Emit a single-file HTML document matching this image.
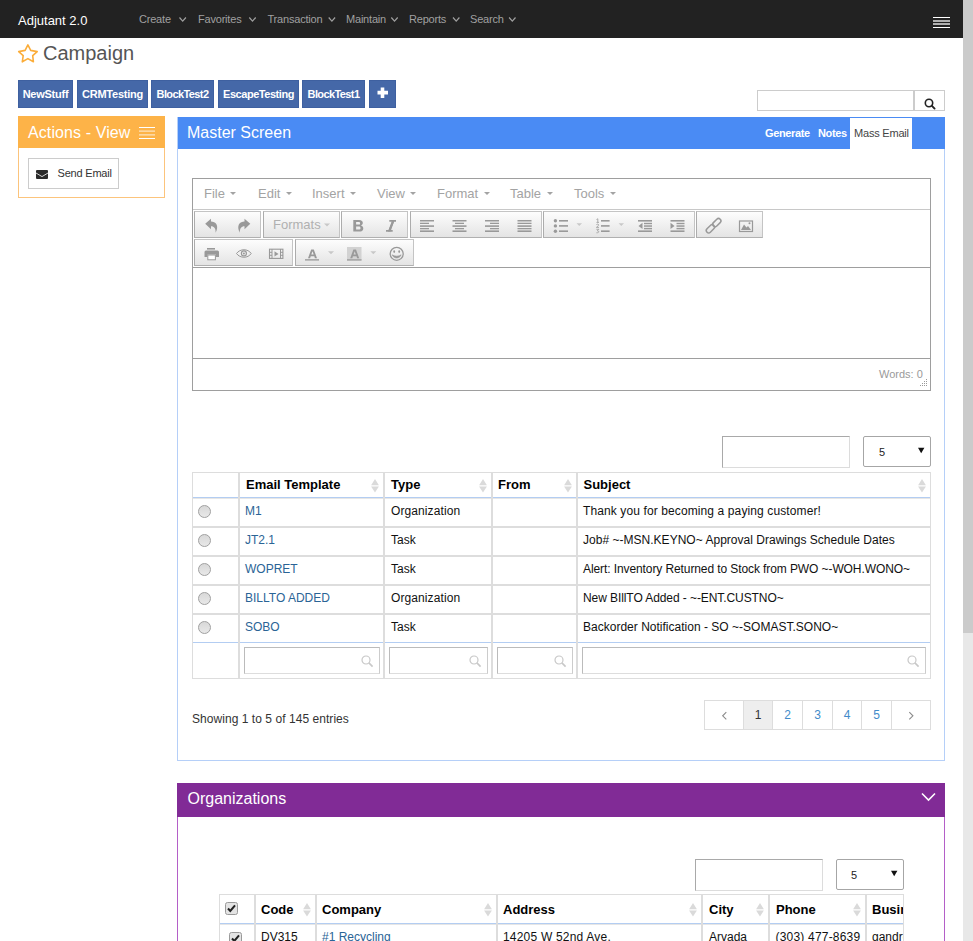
<!DOCTYPE html>
<html><head><meta charset="utf-8">
<style>
*{box-sizing:border-box;}
html,body{margin:0;padding:0;}
body{width:973px;height:941px;overflow:hidden;position:relative;background:#fff;font-family:"Liberation Sans",sans-serif;color:#333;font-size:12px;}
.abs{position:absolute;}
#sb{left:963px;top:0;width:10px;height:941px;background:#e8e8e8;}
#sbt{left:963px;top:0;width:10px;height:633px;background:#cbcbcb;}
#nav{left:0;top:0;width:963px;height:38px;background:#222;}
.brand{left:18px;top:13px;color:#fff;font-size:13px;white-space:nowrap;}
.mi{top:13px;color:#a0a0a0;font-size:11px;white-space:nowrap;letter-spacing:-0.2px;}
.chev{display:inline-block;width:5px;height:5px;border-right:1px solid #9d9d9d;border-bottom:1px solid #9d9d9d;transform:rotate(45deg);margin-left:7px;position:relative;top:-3px;}
#title{left:43px;top:42px;font-size:20px;color:#555;white-space:nowrap;}
.sbtn{top:80px;height:28px;background:#4568a8;border:1px solid #3e60a0;color:#fff;font-weight:bold;font-size:11px;letter-spacing:-0.25px;text-align:center;line-height:26px;white-space:nowrap;}

#srch{left:757px;top:90px;width:157px;height:21px;border:1px solid #ccc;background:#fff;}
#srchb{left:914px;top:90px;width:31px;height:21px;border:1px solid #ccc;background:#fff;}
#act{left:18px;top:116px;width:147px;height:82px;border:1px solid #fcc47c;background:#fff;}
#acth{left:18px;top:116px;width:147px;height:32px;background:#fdb348;}
.acttxt{left:10px;top:8px;color:#fff;font-size:16px;white-space:nowrap;letter-spacing:0.1px;}
.ham{width:16px;height:12px;}
#sendbtn{left:28px;top:158px;width:91px;height:31px;border:1px solid #ccc;background:#fff;}
.sendtxt{left:28.5px;top:8px;font-size:11px;color:#333;white-space:nowrap;letter-spacing:-0.2px;}
#mp{left:177px;top:117px;width:768px;height:644px;border:1px solid #b5cff8;background:#fff;}
#mph{left:178px;top:117px;width:767px;height:32px;background:#4a8bf4;}
.mptxt{left:9px;top:7px;color:#fff;font-size:16px;white-space:nowrap;}
.tab{top:10px;color:#fff;font-weight:bold;font-size:11px;white-space:nowrap;letter-spacing:-0.35px;}
#masstab{left:672px;top:1px;width:62px;height:31px;background:#fff;}
.masstxt{left:4px;top:9px;color:#444;font-size:11px;white-space:nowrap;letter-spacing:-0.2px;}

#ed{left:192px;top:178px;width:739px;height:213px;border:1px solid #9e9e9e;background:#fff;}
#edmb{left:193px;top:209px;width:737px;height:1px;background:#c8c8c8;}
#edtb{left:193px;top:267px;width:737px;height:1px;background:#9e9e9e;}
#edsb{left:193px;top:358px;width:737px;height:1px;background:#9e9e9e;}
.mm{top:185.6px;font-size:13px;color:#a3a3a3;white-space:nowrap;}
.car{display:inline-block;width:0;height:0;border-left:3px solid transparent;border-right:3px solid transparent;border-top:3px solid #a3a3a3;margin-left:5.5px;position:relative;top:-2.5px;}
.grp{height:27px;border:1px solid #c4c4c4;border-bottom-color:#b0b0b0;border-left-color:#acacac;background:linear-gradient(#fdfdfd,#e4e4e4);}
.words{left:879px;top:368px;font-size:11px;color:#9a9a9a;white-space:nowrap;}
.th{font-size:13px;font-weight:bold;color:#000;white-space:nowrap;line-height:15px;}
.td{font-size:12px;color:#111;white-space:nowrap;line-height:14px;}
.lk{color:#2a6496;}
.radio{width:13px;height:13px;border-radius:50%;border:1px solid #a0a0a0;background:linear-gradient(#d8d8d8,#e8e8e8);}
.finp{height:27px;border:1px solid #bbb;border-right-color:#ccc;border-bottom-color:#ddd;background:#fff;}
.inp{border:1px solid #a9a9a9;border-right-color:#dcdcdc;border-bottom-color:#dcdcdc;background:#fff;}
.sel{border:1px solid #a6a6a6;border-radius:2px;background:#fff;}
.seltxt{font-size:12px;color:#222;line-height:14px;}
.pg{top:700px;height:30px;border:1px solid #ddd;background:#fff;font-size:12px;color:#428bca;text-align:center;line-height:28px;}
.info{font-size:12px;color:#333;white-space:nowrap;line-height:14px;}
</style></head><body>
<div id="sb" class="abs"></div><div id="sbt" class="abs"></div>
<div id="nav" class="abs">
  <div class="abs brand">Adjutant 2.0</div>
  <div class="abs mi" style="left:139px">Create</div>
  <div class="abs mi" style="left:198px">Favorites</div>
  <div class="abs mi" style="left:267.5px">Transaction</div>
  <div class="abs mi" style="left:346px">Maintain</div>
  <div class="abs mi" style="left:409px">Reports</div>
  <div class="abs mi" style="left:470px">Search</div>
  <svg class="abs" style="left:0;top:0" width="963" height="38" viewBox="0 0 963 38"><g fill="none" stroke="#a0a0a0" stroke-width="1.2"><path d="M179.5 17.5 L182.7 21.2 L185.9 17.5"/><path d="M249.3 17.5 L252.5 21.2 L255.7 17.5"/><path d="M328.7 17.5 L331.9 21.2 L335.1 17.5"/><path d="M391.3 17.5 L394.5 21.2 L397.7 17.5"/><path d="M453 17.5 L456.2 21.2 L459.4 17.5"/><path d="M509.1 17.5 L512.3 21.2 L515.5 17.5"/></g><g stroke="#fff" stroke-width="1.1"><path d="M933 17.5 H950 M933 27.5 H950"/></g><g stroke="#e0e0e0" stroke-width="1.3"><path d="M933 21 H950 M933 24 H950"/></g></svg>
</div>
<svg class="abs" style="left:14px;top:40px" width="30" height="26" viewBox="0 0 30 26"><path d="M13.9 4.9 L16.7 10.4 L23.2 11.6 L18.7 15.6 L19.4 21.8 L13.9 18.6 L8.3 21.8 L9.2 15.6 L4.7 11.6 L11.1 10.4 Z" fill="none" stroke="#fbad3a" stroke-width="1.6" stroke-linejoin="round"/></svg>
<div id="title" class="abs">Campaign</div>
<div class="abs sbtn" style="left:18px;width:55px">NewStuff</div>
<div class="abs sbtn" style="left:77px;width:71px">CRMTesting</div>
<div class="abs sbtn" style="left:151px;width:63px;letter-spacing:-0.6px">BlockTest2</div>
<div class="abs sbtn" style="left:218px;width:81px;letter-spacing:-0.45px">EscapeTesting</div>
<div class="abs sbtn" style="left:302px;width:63px;letter-spacing:-0.6px">BlockTest1</div>
<div class="abs sbtn" style="left:369px;width:27px"><svg class="abs" style="left:7px;top:6px" width="12" height="12" viewBox="0 0 12 12"><path d="M5.5 0.5 V11 M0.5 5.6 H11" stroke="#fff" stroke-width="3.6"/></svg></div>

<div id="srch" class="abs"></div>
<div id="srchb" class="abs"><svg class="abs" style="left:9px;top:7px" width="12" height="12" viewBox="0 0 12 12"><circle cx="5" cy="5" r="3.7" fill="none" stroke="#222" stroke-width="1.6"/><path d="M7.7 7.7 L10.6 10.6" stroke="#222" stroke-width="1.9" stroke-linecap="round"/></svg></div>
<div id="act" class="abs"></div>
<div id="acth" class="abs">
  <div class="abs acttxt">Actions - View</div>
  <svg class="abs" style="left:121px;top:11px" width="16" height="12" viewBox="0 0 16 12"><g stroke="#fff" stroke-width="1.1"><path d="M0 0.5H16M0 11.5H16"/></g><g stroke="#fde3bd" stroke-width="1.2"><path d="M0 4.2H16M0 7.8H16"/></g></svg>
</div>
<div id="sendbtn" class="abs">
  <svg class="abs" style="left:7px;top:11px" width="12" height="9" viewBox="0 0 12 9"><rect x="0" y="0" width="12" height="9" rx="1" fill="#2b2b2b"/><path d="M0 3 L6 6.6 L12 3" fill="none" stroke="#e8e8e8" stroke-width="0.9"/></svg>
  <div class="abs sendtxt">Send Email</div>
</div>
<div id="mp" class="abs"></div>
<div id="mph" class="abs">
  <div class="abs mptxt">Master Screen</div>
  <div class="abs tab" style="left:587px">Generate</div>
  <div class="abs tab" style="left:640px">Notes</div>
  <div id="masstab" class="abs"><div class="abs masstxt">Mass Email</div></div>
</div>

<div id="ed" class="abs"></div>
<div id="edmb" class="abs"></div>
<div class="abs mm" style="left:204px">File<span class="car"></span></div>
<div class="abs mm" style="left:258px">Edit<span class="car"></span></div>
<div class="abs mm" style="left:312px">Insert<span class="car"></span></div>
<div class="abs mm" style="left:377px">View<span class="car"></span></div>
<div class="abs mm" style="left:437px">Format<span class="car"></span></div>
<div class="abs mm" style="left:510px">Table<span class="car"></span></div>
<div class="abs mm" style="left:574px">Tools<span class="car"></span></div>
<div class="abs grp" style="left:194px;top:211px;width:67px"></div>
<div class="abs grp" style="left:263px;top:211px;width:77px"></div>
<div class="abs grp" style="left:341px;top:211px;width:67px"></div>
<div class="abs grp" style="left:410px;top:211px;width:132px"></div>
<div class="abs grp" style="left:543px;top:211px;width:152px"></div>
<div class="abs grp" style="left:696px;top:211px;width:67px"></div>
<div class="abs grp" style="left:194px;top:239px;width:99px"></div>
<div class="abs grp" style="left:295px;top:239px;width:119px"></div>
<div id="edtb" class="abs"></div>
<div id="edsb" class="abs"></div>
<div class="abs words">Words: 0</div>
<svg class="abs" style="left:0;top:0" width="973" height="400" viewBox="0 0 973 400">
 <g fill="#999" stroke="none">
  <!-- undo -->
  <path d="M205.2 223.8 L211 218.7 V221.4 C215.5 221.4 219.6 225.3 215.6 232.7 C215.9 228.6 214.2 226.3 211 226.3 V229.2 Z"/>
  <!-- redo -->
  <path d="M 250.3 223.8 L 244.5 218.7 V 221.4 C 240.0 221.4 235.9 225.3 239.9 232.7 C 239.6 228.6 241.3 226.3 244.5 226.3 V 229.2 Z"/>
 </g>
 <text x="273" y="229" font-family="Liberation Sans" font-size="13" fill="#b0b0b0">Formats</text>
 <path d="M324 223.5 L330 223.5 L327 226.5 Z" fill="#c8c8c8"/>
 <path fill-rule="evenodd" fill="#999" d="M353.3 219.9 H359 C361.8 219.9 362.8 221.3 362.8 222.8 C362.8 224.2 362 225.1 361 225.5 C362.4 225.9 363.3 227 363.3 228.5 C363.3 230.4 362 231.6 359.3 231.6 H353.3 Z M356.1 222 H358.5 C359.6 222 360.1 222.5 360.1 223.4 C360.1 224.2 359.6 224.6 358.5 224.6 H356.1 Z M356.1 226.6 H358.8 C360 226.6 360.5 227.3 360.5 228.2 C360.5 229.1 360 229.5 358.8 229.5 H356.1 Z"/>
 <path d="M389.3 220.8 H396 M386 230.8 H392.7 M393.4 220.8 L389.2 230.8" stroke="#999" stroke-width="1.7" fill="none"/><path d="M392.2 220 L394.7 220 L390.5 231.6 L388 231.6 Z" fill="#999"/>
 <g fill="#999">
  <!-- align left -->
  <rect x="420" y="220" width="14" height="1.5"/><rect x="420" y="222.7" width="9" height="1.3"/><rect x="420" y="225.3" width="14" height="1.6"/><rect x="420" y="228" width="9" height="1.3"/><rect x="420" y="230.4" width="14" height="1.6"/>
  <!-- center -->
  <rect x="452.5" y="220" width="14" height="1.5"/><rect x="455" y="222.7" width="9" height="1.3"/><rect x="452.5" y="225.3" width="14" height="1.6"/><rect x="455" y="228" width="9" height="1.3"/><rect x="452.5" y="230.4" width="14" height="1.6"/>
  <!-- right -->
  <rect x="485" y="220" width="14" height="1.5"/><rect x="490" y="222.7" width="9" height="1.3"/><rect x="485" y="225.3" width="14" height="1.6"/><rect x="490" y="228" width="9" height="1.3"/><rect x="485" y="230.4" width="14" height="1.6"/>
  <!-- justify -->
  <rect x="517.5" y="220" width="14" height="1.5"/><rect x="517.5" y="222.7" width="14" height="1.3"/><rect x="517.5" y="225.3" width="14" height="1.6"/><rect x="517.5" y="228" width="14" height="1.3"/><rect x="517.5" y="230.4" width="14" height="1.6"/>
  <!-- bullist -->
  <circle cx="555.4" cy="220.7" r="1.7"/><circle cx="555.4" cy="225.9" r="1.7"/><circle cx="555.4" cy="231.2" r="1.7"/>
  <rect x="559" y="220" width="9" height="1.6"/><rect x="559" y="225.1" width="9" height="1.6"/><rect x="559" y="230.4" width="9" height="1.6"/>
  <!-- numlist -->
  <rect x="601" y="220" width="8.6" height="1.6"/><rect x="601" y="225.1" width="8.6" height="1.6"/><rect x="601" y="230.4" width="8.6" height="1.6"/>
 </g>
 <g stroke="#999" stroke-width="0.8" fill="none">
  <path d="M596.5 219.5 L597.8 218.8 V222.2 M596.5 222.4 H599"/>
  <path d="M596.4 224.6 C597 223.8 599 224 598.6 225.3 L596.4 227.4 H599"/>
  <path d="M596.4 229.3 H598.8 L597.3 230.8 C599.4 230.8 599.4 233 596.4 232.8"/>
 </g>
 <path d="M576.5 223.2 L582 223.2 L579.25 226 Z" fill="#c8c8c8"/>
 <path d="M618.6 223.2 L624 223.2 L621.3 226 Z" fill="#c8c8c8"/>
 <g fill="#999">
  <!-- outdent -->
  <rect x="638" y="220" width="14" height="1.6"/><rect x="644" y="222.8" width="8" height="1.4"/><rect x="644" y="225.3" width="8" height="1.5"/><rect x="644" y="227.9" width="8" height="1.4"/><rect x="638" y="230.4" width="14" height="1.6"/>
  <path d="M638.5 225.9 L642.5 222.8 V229 Z"/>
  <!-- indent -->
  <rect x="670.5" y="220" width="14" height="1.6"/><rect x="676.5" y="222.8" width="8" height="1.4"/><rect x="676.5" y="225.3" width="8" height="1.5"/><rect x="676.5" y="227.9" width="8" height="1.4"/><rect x="670.5" y="230.4" width="14" height="1.6"/>
  <path d="M674.5 225.9 L670.5 222.8 V229 Z"/>
 </g>
 <!-- link -->
 <g stroke="#999" stroke-width="1.5" fill="none">
  <rect x="-4.8" y="-2.4" width="9.6" height="4.8" rx="2.4" transform="translate(710.4 228.8) rotate(-45)"/>
  <rect x="-4.8" y="-2.4" width="9.6" height="4.8" rx="2.4" transform="translate(716.8 222.6) rotate(-45)"/>
 </g>
 <!-- image -->
 <rect x="739.5" y="221" width="13" height="10.5" fill="none" stroke="#999" stroke-width="1.2"/>
 <path d="M741 230 L744 224.5 L746.5 227.5 L748 226 L751 230 Z" fill="#999"/>
 <circle cx="749.5" cy="223.3" r="1" fill="#999"/>
 <!-- print -->
 <g fill="#999">
  <rect x="207" y="248" width="8" height="1.6"/>
  <path d="M204.5 252 Q204.5 250.5 206 250.5 H217.5 Q219 250.5 219 252 V257 H216 V254.5 H207.5 V257 H204.5 Z"/>
 </g>
 <rect x="207.8" y="255" width="7.6" height="4.8" fill="#fff" stroke="#999" stroke-width="1"/>
 <!-- eye -->
 <path d="M236.5 253.5 C240 248.5 248 248.5 251.2 253.5 C248 258.5 240 258.5 236.5 253.5 Z" fill="none" stroke="#999" stroke-width="1"/>
 <circle cx="243.9" cy="253.4" r="2.5" fill="none" stroke="#999" stroke-width="1.2"/><circle cx="243.9" cy="253.4" r="1" fill="#999"/>
 <!-- media -->
 <rect x="269.5" y="249.2" width="13.4" height="9.2" fill="none" stroke="#999" stroke-width="1.1"/>
 <path d="M272 249 V258.7 M280.5 249 V258.7 M269.5 252.3 H272 M269.5 255.3 H272 M280.5 252.3 H283 M280.5 255.3 H283" stroke="#999" stroke-width="1"/>
 <path d="M274.5 251.3 L278.5 253.9 L274.5 256.5 Z" fill="#999"/>
 <!-- forecolor -->
 <path fill-rule="evenodd" fill="#999" d="M308 258.2 L311.2 249.6 H313.8 L317 258.2 H314.9 L314.3 256.3 H310.7 L310.1 258.2 Z M311.3 254.6 H313.7 L312.5 251.2 Z"/>
 <rect x="305" y="259" width="14" height="1.7" fill="#aaa"/>
 <path d="M328 251.3 L334 251.3 L331 254.3 Z" fill="#c8c8c8"/>
 <!-- backcolor -->
 <rect x="347" y="247" width="14.5" height="13.7" fill="#d2d2d2"/>
 <path fill-rule="evenodd" fill="#999" d="M350.2 258.2 L353.4 249.6 H356.0 L359.2 258.2 H357.09999999999997 L356.5 256.3 H352.9 L352.3 258.2 Z M353.5 254.6 H355.9 L354.7 251.2 Z"/>
 <rect x="347" y="259" width="14.5" height="1.7" fill="#aaa"/>
 <path d="M370.3 251.3 L376.3 251.3 L373.3 254.3 Z" fill="#c8c8c8"/>
 <!-- emoticon -->
 <circle cx="396.7" cy="253.8" r="6.5" fill="none" stroke="#999" stroke-width="1.3"/>
 <ellipse cx="394.2" cy="251.6" rx="0.9" ry="1.3" fill="#999"/><ellipse cx="399.2" cy="251.6" rx="0.9" ry="1.3" fill="#999"/>
 <path d="M392.3 254.8 C393.5 259 399.9 259 401.1 254.8 C399.5 256.6 393.9 256.6 392.3 254.8 Z" fill="#999" stroke="#999" stroke-width="0.6"/>
 <!-- resize grip -->
 <g fill="#999"><rect x="926" y="379" width="1" height="1"/><rect x="924" y="381" width="1" height="1"/><rect x="926" y="381" width="1" height="1"/><rect x="922" y="383" width="1" height="1"/><rect x="924" y="383" width="1" height="1"/><rect x="926" y="383" width="1" height="1"/><rect x="920" y="385" width="1" height="1"/><rect x="922" y="385" width="1" height="1"/><rect x="924" y="385" width="1" height="1"/><rect x="926" y="385" width="1" height="1"/></g>
</svg>
<div class="abs" style="left:192px;top:472px;width:739px;height:1px;background:#dddddd"></div>
<div class="abs" style="left:192px;top:472px;width:1px;height:207px;background:#dddddd"></div>
<div class="abs" style="left:930px;top:472px;width:1px;height:207px;background:#dddddd"></div>
<div class="abs" style="left:192px;top:678px;width:739px;height:1px;background:#dddddd"></div>
<div class="abs" style="left:238px;top:472px;width:2px;height:207px;background:#dddddd"></div>
<div class="abs" style="left:383px;top:472px;width:2px;height:207px;background:#dddddd"></div>
<div class="abs" style="left:491px;top:472px;width:2px;height:207px;background:#dddddd"></div>
<div class="abs" style="left:576px;top:472px;width:2px;height:207px;background:#dddddd"></div>
<div class="abs" style="left:193px;top:497px;width:737px;height:1px;background:#b3cdf2"></div>
<div class="abs" style="left:193px;top:498px;width:737px;height:1px;background:#e6e6e6"></div>
<div class="abs" style="left:193px;top:526px;width:737px;height:2px;background:#dddddd"></div>
<div class="abs" style="left:193px;top:555px;width:737px;height:2px;background:#dddddd"></div>
<div class="abs" style="left:193px;top:584px;width:737px;height:2px;background:#dddddd"></div>
<div class="abs" style="left:193px;top:613px;width:737px;height:2px;background:#dddddd"></div>
<div class="abs" style="left:193px;top:642px;width:737px;height:1px;background:#b3cdf2"></div>
<div class="abs" style="left:238px;top:472px;width:2px;height:207px;background:#dddddd"></div>
<div class="abs" style="left:383px;top:472px;width:2px;height:207px;background:#dddddd"></div>
<div class="abs" style="left:491px;top:472px;width:2px;height:207px;background:#dddddd"></div>
<div class="abs" style="left:576px;top:472px;width:2px;height:207px;background:#dddddd"></div>
<div class="abs th" style="left:246px;top:477px;">Email Template</div>
<svg class="abs" style="left:370.5px;top:478.5px" width="8" height="14" viewBox="0 0 8 14"><path d="M4 0 L7.9 6.2 H0.1 Z M4 13.5 L7.9 7.4 H0.1 Z" fill="#dadada"/></svg>
<div class="abs th" style="left:391px;top:477px;">Type</div>
<svg class="abs" style="left:478.5px;top:478.5px" width="8" height="14" viewBox="0 0 8 14"><path d="M4 0 L7.9 6.2 H0.1 Z M4 13.5 L7.9 7.4 H0.1 Z" fill="#dadada"/></svg>
<div class="abs th" style="left:498px;top:477px;">From</div>
<svg class="abs" style="left:563.5px;top:478.5px" width="8" height="14" viewBox="0 0 8 14"><path d="M4 0 L7.9 6.2 H0.1 Z M4 13.5 L7.9 7.4 H0.1 Z" fill="#dadada"/></svg>
<div class="abs th" style="left:583.5px;top:477px;">Subject</div>
<svg class="abs" style="left:917.5px;top:478.5px" width="8" height="14" viewBox="0 0 8 14"><path d="M4 0 L7.9 6.2 H0.1 Z M4 13.5 L7.9 7.4 H0.1 Z" fill="#dadada"/></svg>
<div class="abs radio" style="left:198px;top:505px"></div>
<div class="abs td lk" style="left:245px;top:504px;">M1</div>
<div class="abs td" style="left:391px;top:504px;letter-spacing:0.1px">Organization</div>
<div class="abs td" style="left:583px;top:504px;letter-spacing:0.11px">Thank you for becoming a paying customer!</div>
<div class="abs radio" style="left:198px;top:534px"></div>
<div class="abs td lk" style="left:245px;top:533px;">JT2.1</div>
<div class="abs td" style="left:391px;top:533px;">Task</div>
<div class="abs td" style="left:583px;top:533px;letter-spacing:0.02px">Job# ~-MSN.KEYNO~ Approval Drawings Schedule Dates</div>
<div class="abs radio" style="left:198px;top:563px"></div>
<div class="abs td lk" style="left:245px;top:562px;">WOPRET</div>
<div class="abs td" style="left:391px;top:562px;">Task</div>
<div class="abs td" style="left:583px;top:562px;letter-spacing:-0.095px">Alert: Inventory Returned to Stock from PWO ~-WOH.WONO~</div>
<div class="abs radio" style="left:198px;top:592px"></div>
<div class="abs td lk" style="left:245px;top:591px;">BILLTO ADDED</div>
<div class="abs td" style="left:391px;top:591px;letter-spacing:0.1px">Organization</div>
<div class="abs td" style="left:583px;top:591px;letter-spacing:-0.08px">New BIllTO Added - ~-ENT.CUSTNO~</div>
<div class="abs radio" style="left:198px;top:621px"></div>
<div class="abs td lk" style="left:245px;top:620px;">SOBO</div>
<div class="abs td" style="left:391px;top:620px;">Task</div>
<div class="abs td" style="left:583px;top:620px;letter-spacing:0.01px">Backorder Notification - SO ~-SOMAST.SONO~</div>
<div class="abs finp" style="left:244px;top:647px;width:136px"></div>
<svg class="abs" style="left:360.5px;top:655px" width="13" height="13" viewBox="0 0 13 13"><circle cx="5" cy="5" r="4" fill="none" stroke="#c8c8c8" stroke-width="1.2"/><path d="M7.9 7.9 L11.6 11.6" stroke="#c8c8c8" stroke-width="1.6"/></svg>
<div class="abs finp" style="left:389px;top:647px;width:99px"></div>
<svg class="abs" style="left:468.5px;top:655px" width="13" height="13" viewBox="0 0 13 13"><circle cx="5" cy="5" r="4" fill="none" stroke="#c8c8c8" stroke-width="1.2"/><path d="M7.9 7.9 L11.6 11.6" stroke="#c8c8c8" stroke-width="1.6"/></svg>
<div class="abs finp" style="left:497px;top:647px;width:76px"></div>
<svg class="abs" style="left:553.5px;top:655px" width="13" height="13" viewBox="0 0 13 13"><circle cx="5" cy="5" r="4" fill="none" stroke="#c8c8c8" stroke-width="1.2"/><path d="M7.9 7.9 L11.6 11.6" stroke="#c8c8c8" stroke-width="1.6"/></svg>
<div class="abs finp" style="left:582px;top:647px;width:344px"></div>
<svg class="abs" style="left:906.5px;top:655px" width="13" height="13" viewBox="0 0 13 13"><circle cx="5" cy="5" r="4" fill="none" stroke="#c8c8c8" stroke-width="1.2"/><path d="M7.9 7.9 L11.6 11.6" stroke="#c8c8c8" stroke-width="1.6"/></svg>
<div class="abs inp" style="left:722px;top:436px;width:128px;height:32px"></div>
<div class="abs sel" style="left:863px;top:436px;width:68px;height:31px"></div>
<div class="abs seltxt" style="left:879px;top:445px;font-size:11px">5</div>
<svg class="abs" style="left:918px;top:447px" width="8" height="7" viewBox="0 0 8 7"><path d="M0 0.8 H6.4 L3.2 6.2 Z" fill="#111"/></svg>
<div class="abs info" style="left:192px;top:712px;letter-spacing:0.05px">Showing 1 to 5 of 145 entries</div>
<div class="abs pg" style="left:704px;width:40px;"></div>
<svg class="abs" style="left:720px;top:710px" width="10" height="12" viewBox="0 0 10 12"><path d="M6.3 2.2 L2.7 5.8 L6.3 9.4" fill="none" stroke="#8a8a8a" stroke-width="1.1"/></svg>
<div class="abs pg" style="left:743px;width:30px;background:#eee;color:#333;">1</div>
<div class="abs pg" style="left:772px;width:31px;">2</div>
<div class="abs pg" style="left:802px;width:31px;">3</div>
<div class="abs pg" style="left:832px;width:30px;">4</div>
<div class="abs pg" style="left:861px;width:31px;">5</div>
<div class="abs pg" style="left:891px;width:40px;"></div>
<svg class="abs" style="left:906px;top:710px" width="10" height="12" viewBox="0 0 10 12"><path d="M3.3 2.2 L6.9 5.8 L3.3 9.4" fill="none" stroke="#8a8a8a" stroke-width="1.1"/></svg>
<div class="abs" style="left:177px;top:783px;width:768px;height:170px;border:1px solid #b45fc8;border-top:none;background:#fff"></div>
<div class="abs" style="left:177px;top:783px;width:768px;height:34px;background:#812b96"></div>
<div class="abs" style="left:187.5px;top:790px;color:#fff;font-size:16px;white-space:nowrap;line-height:18px">Organizations</div>
<svg class="abs" style="left:921px;top:792px" width="15" height="10" viewBox="0 0 15 10"><path d="M1 1.5 L7.5 8 L14 1.5" fill="none" stroke="#fff" stroke-width="1.6"/></svg>
<div class="abs inp" style="left:695px;top:859px;width:128px;height:32px"></div>
<div class="abs sel" style="left:836px;top:859px;width:68px;height:31px"></div>
<div class="abs seltxt" style="left:851px;top:868px;font-size:11px">5</div>
<svg class="abs" style="left:891px;top:870px" width="8" height="7" viewBox="0 0 8 7"><path d="M0 0.8 H6.4 L3.2 6.2 Z" fill="#111"/></svg>
<div class="abs" style="left:219px;top:894px;width:685px;height:1px;background:#dddddd"></div>
<div class="abs" style="left:219px;top:894px;width:1px;height:47px;background:#dddddd"></div>
<div class="abs" style="left:254px;top:894px;width:2px;height:47px;background:#dddddd"></div>
<div class="abs" style="left:315px;top:894px;width:2px;height:47px;background:#dddddd"></div>
<div class="abs" style="left:496px;top:894px;width:2px;height:47px;background:#dddddd"></div>
<div class="abs" style="left:701px;top:894px;width:2px;height:47px;background:#dddddd"></div>
<div class="abs" style="left:768px;top:894px;width:2px;height:47px;background:#dddddd"></div>
<div class="abs" style="left:865px;top:894px;width:2px;height:47px;background:#dddddd"></div>
<div class="abs" style="left:903px;top:894px;width:1px;height:47px;background:#dddddd"></div>
<div class="abs" style="left:220px;top:923px;width:683px;height:1px;background:#b3cdf2"></div>
<div class="abs" style="left:220px;top:924px;width:683px;height:1px;background:#e6e6e6"></div>
<div class="abs" style="left:254px;top:894px;width:2px;height:47px;background:#dddddd"></div>
<div class="abs" style="left:315px;top:894px;width:2px;height:47px;background:#dddddd"></div>
<div class="abs" style="left:496px;top:894px;width:2px;height:47px;background:#dddddd"></div>
<div class="abs" style="left:701px;top:894px;width:2px;height:47px;background:#dddddd"></div>
<div class="abs" style="left:768px;top:894px;width:2px;height:47px;background:#dddddd"></div>
<div class="abs" style="left:865px;top:894px;width:2px;height:47px;background:#dddddd"></div>
<div class="abs th" style="left:261px;top:902px;">Code</div>
<svg class="abs" style="left:302.5px;top:902.5px" width="8" height="14" viewBox="0 0 8 14"><path d="M4 0 L7.9 6.2 H0.1 Z M4 13.5 L7.9 7.4 H0.1 Z" fill="#dadada"/></svg>
<div class="abs th" style="left:322px;top:902px;">Company</div>
<svg class="abs" style="left:483.5px;top:902.5px" width="8" height="14" viewBox="0 0 8 14"><path d="M4 0 L7.9 6.2 H0.1 Z M4 13.5 L7.9 7.4 H0.1 Z" fill="#dadada"/></svg>
<div class="abs th" style="left:503px;top:902px;">Address</div>
<svg class="abs" style="left:688.5px;top:902.5px" width="8" height="14" viewBox="0 0 8 14"><path d="M4 0 L7.9 6.2 H0.1 Z M4 13.5 L7.9 7.4 H0.1 Z" fill="#dadada"/></svg>
<div class="abs th" style="left:709px;top:902px;">City</div>
<svg class="abs" style="left:755.5px;top:902.5px" width="8" height="14" viewBox="0 0 8 14"><path d="M4 0 L7.9 6.2 H0.1 Z M4 13.5 L7.9 7.4 H0.1 Z" fill="#dadada"/></svg>
<div class="abs th" style="left:776px;top:902px;">Phone</div>
<svg class="abs" style="left:852.5px;top:902.5px" width="8" height="14" viewBox="0 0 8 14"><path d="M4 0 L7.9 6.2 H0.1 Z M4 13.5 L7.9 7.4 H0.1 Z" fill="#dadada"/></svg>
<div class="abs" style="left:866px;top:895px;width:37px;height:46px;overflow:hidden"><div class="abs th" style="left:6px;top:7px">Business</div><div class="abs td" style="left:6px;top:35px">gandrews@</div></div>
<svg class="abs" style="left:225px;top:902px" width="13" height="13" viewBox="0 0 13 13"><rect x="0.5" y="0.5" width="12" height="12" rx="2" fill="#e4e4e4" stroke="#9a9a9a"/><path d="M3 6.5 L5.3 9 L10 3.3" fill="none" stroke="#222" stroke-width="2"/></svg>
<svg class="abs" style="left:229px;top:932px" width="13" height="13" viewBox="0 0 13 13"><rect x="0.5" y="0.5" width="12" height="12" rx="2" fill="#e4e4e4" stroke="#9a9a9a"/><path d="M3 6.5 L5.3 9 L10 3.3" fill="none" stroke="#222" stroke-width="2"/></svg>
<div class="abs td" style="left:261px;top:930px;letter-spacing:0px">DV315</div>
<div class="abs td lk" style="left:322px;top:930px;letter-spacing:0px">#1 Recycling</div>
<div class="abs td" style="left:503px;top:930px;letter-spacing:0.2px">14205 W 52nd Ave.</div>
<div class="abs td" style="left:709px;top:930px;letter-spacing:0px">Arvada</div>
<div class="abs td" style="left:775.5px;top:930px;letter-spacing:0.2px">(303) 477-8639</div>
</body></html>
